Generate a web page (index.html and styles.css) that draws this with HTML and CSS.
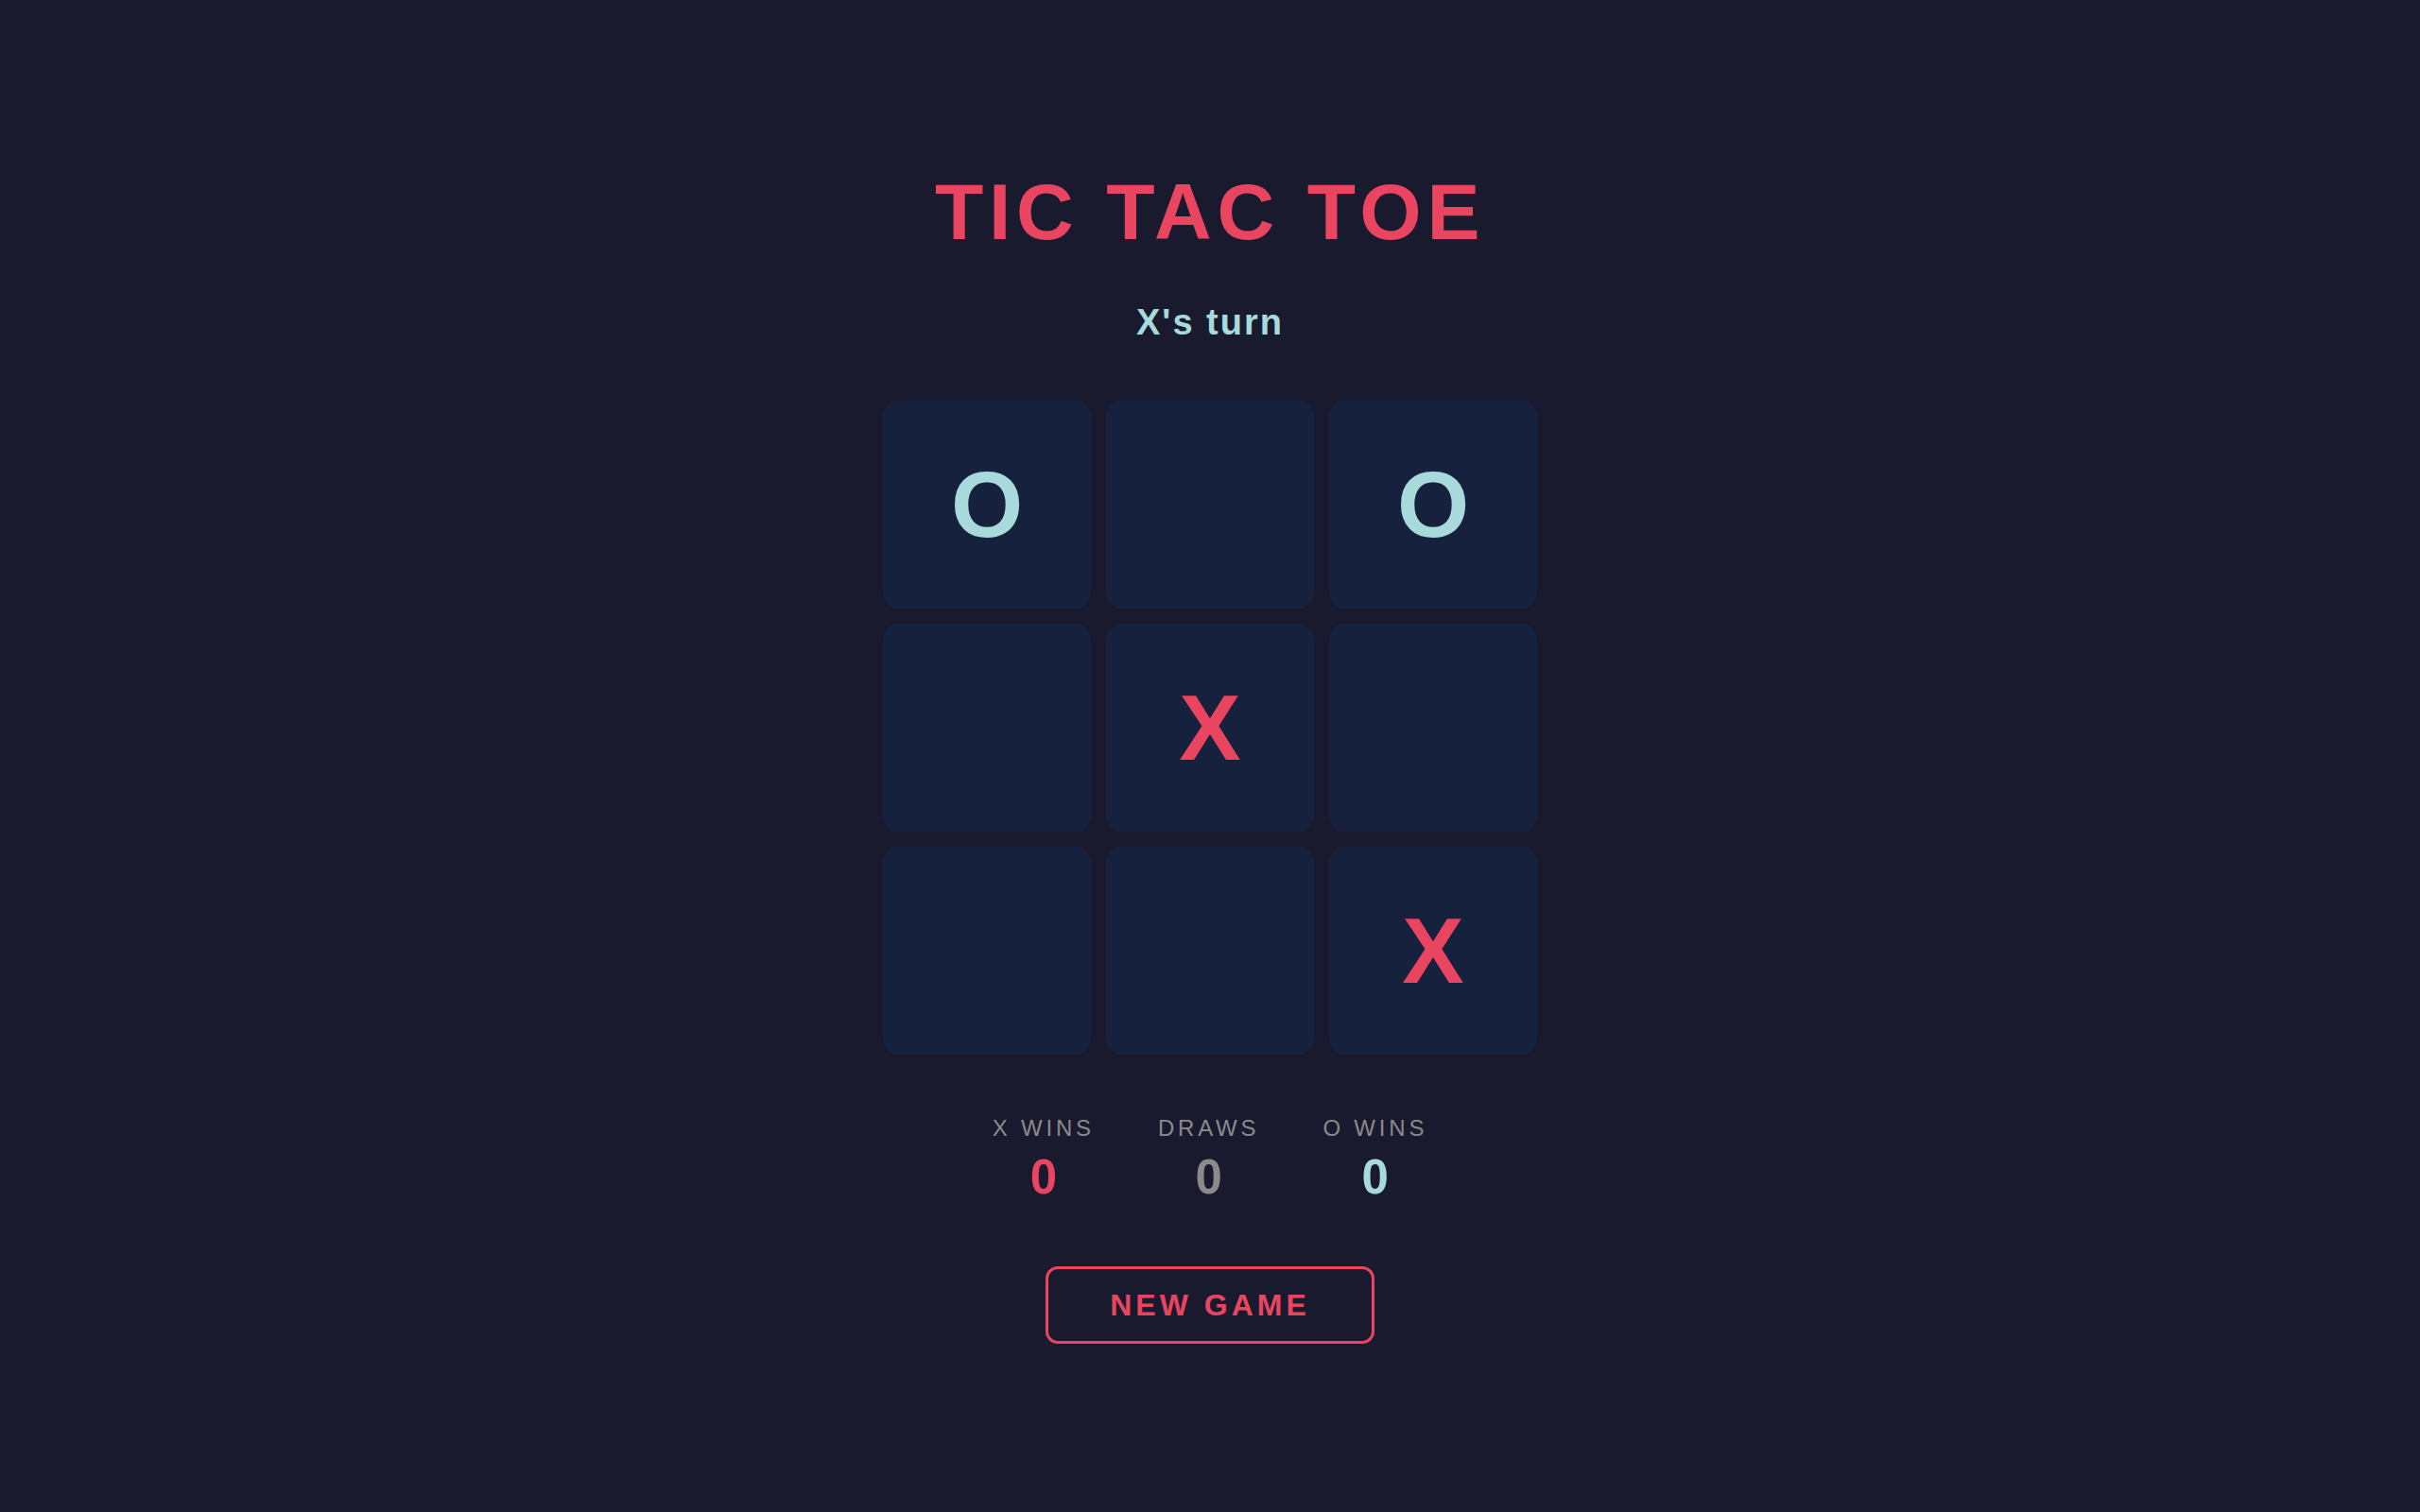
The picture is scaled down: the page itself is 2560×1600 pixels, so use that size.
FILE: index.html
```html
<!DOCTYPE html>
<html lang="en">
<head>
<meta charset="utf-8">
<title>Tic Tac Toe</title>
<link rel="stylesheet" href="styles.css">
</head>
<body>
<main class="game">
  <h1 class="title">TIC TAC TOE</h1>
  <p class="status">X's turn</p>
  <div class="board">
    <button class="cell o">O</button>
    <button class="cell"></button>
    <button class="cell o">O</button>
    <button class="cell"></button>
    <button class="cell x">X</button>
    <button class="cell"></button>
    <button class="cell"></button>
    <button class="cell"></button>
    <button class="cell x">X</button>
  </div>
  <div class="scores">
    <div class="score">
      <span class="score-label">X WINS</span>
      <span class="score-value x">0</span>
    </div>
    <div class="score">
      <span class="score-label">DRAWS</span>
      <span class="score-value draw">0</span>
    </div>
    <div class="score">
      <span class="score-label">O WINS</span>
      <span class="score-value o">0</span>
    </div>
  </div>
  <button class="new-game">NEW GAME</button>
</main>
</body>
</html>
```

FILE: styles.css
```css
html, body {
  margin: 0;
  padding: 0;
}

body {
  background: #1a1a2e;
  min-height: 1600px;
  font-family: "Liberation Sans", Arial, Helvetica, sans-serif;
}

.game {
  display: flex;
  flex-direction: column;
  align-items: center;
  padding-top: 182px;
}

.title {
  margin: 0;
  font-size: 84px;
  line-height: 1;
  font-weight: 700;
  letter-spacing: 5.7px;
  color: #e94560;
}

.status {
  margin: 56px 0 0;
  font-size: 38px;
  line-height: 1;
  font-weight: 700;
  letter-spacing: 2px;
  color: #a8dadc;
}

.board {
  margin-top: 64px;
  display: grid;
  grid-template-columns: repeat(3, 220px);
  grid-template-rows: repeat(3, 220px);
  gap: 16px;
}

.cell {
  border: none;
  padding: 0;
  margin: 0;
  border-radius: 16px;
  background: #16213e;
  font-family: "Liberation Sans", Arial, Helvetica, sans-serif;
  font-size: 98px;
  font-weight: 700;
  line-height: 1;
  display: flex;
  align-items: center;
  justify-content: center;
}

.cell.x { color: #e94560; }
.cell.o { color: #a8dadc; }

.scores {
  margin-top: 66px;
  display: flex;
  gap: 67px;
}

.score {
  display: flex;
  flex-direction: column;
  align-items: center;
  gap: 14px;
}

.score-label {
  font-size: 24px;
  line-height: 1;
  letter-spacing: 3.8px;
  color: #8a8a8f;
}

.score-value {
  font-size: 51px;
  line-height: 1;
  font-weight: 700;
}

.score-value.x { color: #e94560; }
.score-value.draw { color: #8a8a8a; }
.score-value.o { color: #a8dadc; }

.new-game {
  margin-top: 69px;
  background: transparent;
  border: 3px solid #e94560;
  border-radius: 13px;
  color: #e94560;
  font-family: "Liberation Sans", Arial, Helvetica, sans-serif;
  font-size: 32px;
  line-height: 1;
  font-weight: 700;
  letter-spacing: 4px;
  padding: 22px 65px;
}
```
